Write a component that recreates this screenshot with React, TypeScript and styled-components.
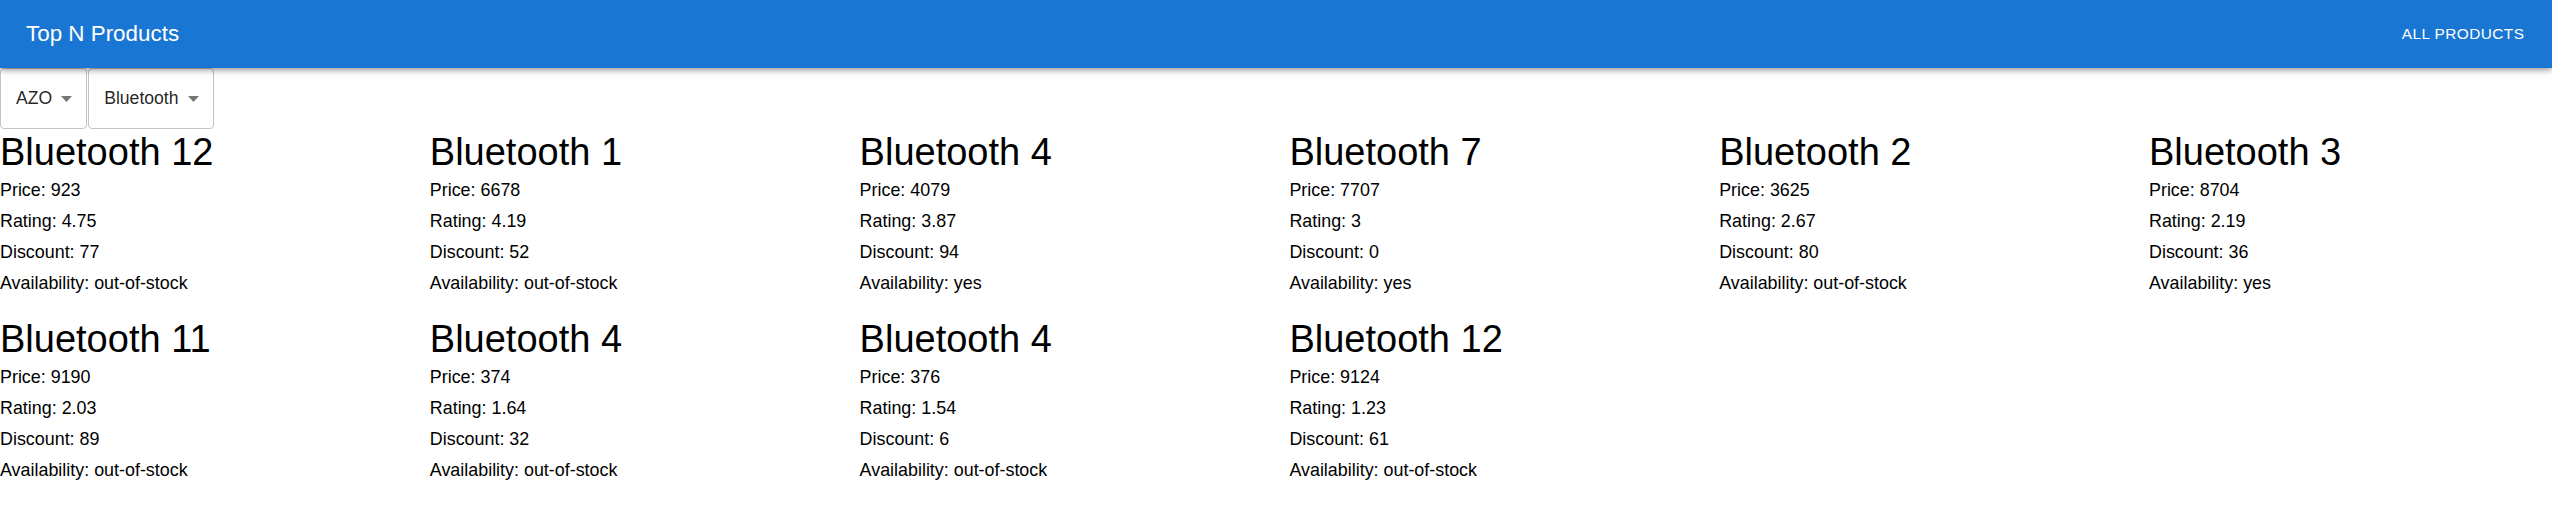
import React from "react";
import styled, { createGlobalStyle } from "styled-components";

const GlobalStyle = createGlobalStyle`
  html, body {
    margin: 0;
    padding: 0;
    background: #ffffff;
    overflow: hidden;
  }
  body {
    font-family: "Liberation Sans", Arial, sans-serif;
  }
`;

const Page = styled.div`
  width: 100%;
  overflow: hidden;
`;

const AppBar = styled.header`
  position: relative;
  z-index: 2;
  height: 68px;
  background: #1976d2;
  color: #ffffff;
  display: flex;
  align-items: center;
  justify-content: space-between;
  padding: 0 27.6px 0 26px;
  box-sizing: border-box;
  box-shadow: 0px 2px 4px -1px rgba(0, 0, 0, 0.2),
    0px 4px 5px 0px rgba(0, 0, 0, 0.14), 0px 1px 10px 0px rgba(0, 0, 0, 0.12);
`;

const Title = styled.div`
  font-family: "Liberation Sans", Arial, sans-serif;
  font-size: 22.4px;
  font-weight: 400;
`;

const NavButton = styled.button`
  background: none;
  border: none;
  padding: 0;
  color: #ffffff;
  font-family: "Liberation Sans", Arial, sans-serif;
  font-size: 15.4px;
  font-weight: 400;
  letter-spacing: 0.44px;
  text-transform: uppercase;
  cursor: pointer;
`;

const Filters = styled.div`
  display: flex;
  gap: 1px;
`;

const SelectBox = styled.div`
  height: 61px;
  box-sizing: border-box;
  border: 1px solid #c4c4c4;
  border-radius: 4px;
  display: flex;
  align-items: center;
  padding: 0 14px 0 15px;
  gap: 9px;
  color: rgba(0, 0, 0, 0.87);
  font-family: "Liberation Sans", Arial, sans-serif;
  font-size: 17.6px;
`;

const Caret = styled.svg`
  width: 11px;
  height: 6px;
  fill: #757575;
  flex: none;
`;

const Grid = styled.div`
  display: grid;
  grid-template-columns: repeat(6, 429.8px);
  row-gap: 16.8px;
  width: 2578.8px;
`;

const Card = styled.div`
  color: #000000;
`;

const Name = styled.div`
  font-family: "Liberation Sans", Arial, sans-serif;
  font-size: 38px;
  line-height: 46.2px;
  font-weight: 400;
  white-space: nowrap;
`;

const Line = styled.div`
  font-family: "Liberation Sans", Arial, sans-serif;
  font-size: 17.9px;
  line-height: 31px;
  white-space: nowrap;
`;

type Product = {
  name: string;
  price: number;
  rating: number;
  discount: number;
  availability: string;
};

const products: Product[] = [
  { name: "Bluetooth 12", price: 923, rating: 4.75, discount: 77, availability: "out-of-stock" },
  { name: "Bluetooth 1", price: 6678, rating: 4.19, discount: 52, availability: "out-of-stock" },
  { name: "Bluetooth 4", price: 4079, rating: 3.87, discount: 94, availability: "yes" },
  { name: "Bluetooth 7", price: 7707, rating: 3, discount: 0, availability: "yes" },
  { name: "Bluetooth 2", price: 3625, rating: 2.67, discount: 80, availability: "out-of-stock" },
  { name: "Bluetooth 3", price: 8704, rating: 2.19, discount: 36, availability: "yes" },
  { name: "Bluetooth 11", price: 9190, rating: 2.03, discount: 89, availability: "out-of-stock" },
  { name: "Bluetooth 4", price: 374, rating: 1.64, discount: 32, availability: "out-of-stock" },
  { name: "Bluetooth 4", price: 376, rating: 1.54, discount: 6, availability: "out-of-stock" },
  { name: "Bluetooth 12", price: 9124, rating: 1.23, discount: 61, availability: "out-of-stock" },
];

const Select: React.FC<{ value: string }> = ({ value }) => (
  <SelectBox>
    <span>{value}</span>
    <Caret viewBox="7 10 10 5" preserveAspectRatio="none">
      <path d="M7 10l5 5 5-5z" />
    </Caret>
  </SelectBox>
);

export default function App() {
  return (
    <Page>
      <GlobalStyle />
      <AppBar>
        <Title>Top N Products</Title>
        <NavButton>All Products</NavButton>
      </AppBar>
      <Filters>
        <Select value="AZO" />
        <Select value="Bluetooth" />
      </Filters>
      <Grid>
        {products.map((p, i) => (
          <Card key={i}>
            <Name>{p.name}</Name>
            <Line>Price: {p.price}</Line>
            <Line>Rating: {p.rating}</Line>
            <Line>Discount: {p.discount}</Line>
            <Line>Availability: {p.availability}</Line>
          </Card>
        ))}
      </Grid>
    </Page>
  );
}
